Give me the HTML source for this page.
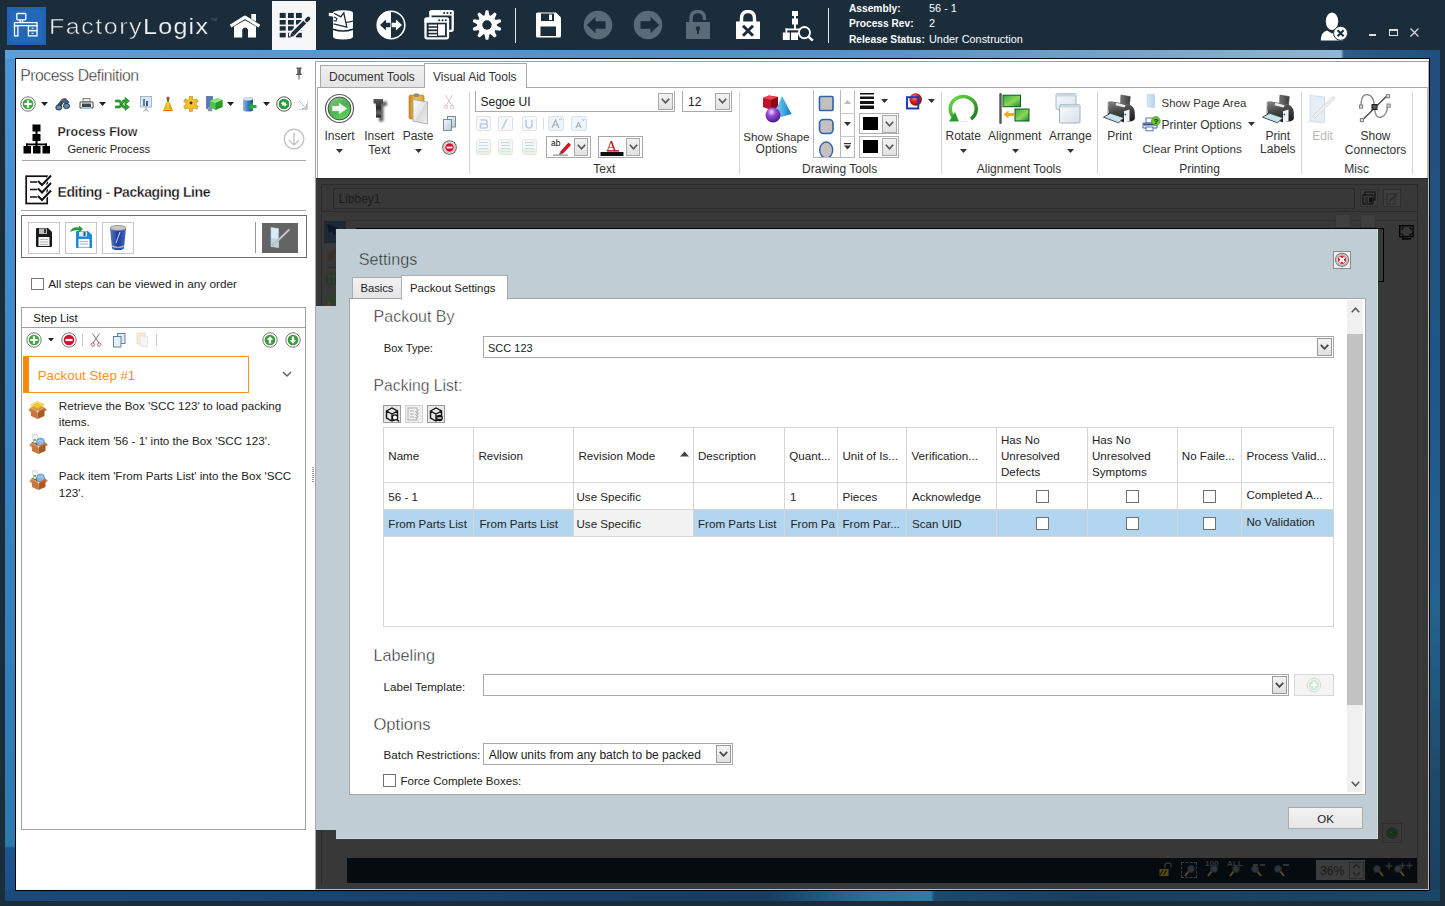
<!DOCTYPE html>
<html><head><meta charset="utf-8">
<style>
*{box-sizing:border-box;margin:0;padding:0}
html,body{width:1445px;height:906px;overflow:hidden;background:#1b2d3b;font-family:"Liberation Sans",sans-serif;color:#222;position:relative}
.a{position:absolute}
.t{position:absolute;white-space:nowrap}
</style></head><body>
<!-- TOP BAR -->
<div class="a" style="left:0;top:0;width:1445px;height:50px;background:#1b2d3b"></div>
<div class="a" style="left:7px;top:7px;width:39px;height:38px;background:#1f63b3"></div>
<div class="a" style="left:10px;top:10px;width:33px;height:32px;background:#2267b8"></div>
<svg class="a" style="left:7px;top:7px" width="39" height="38" viewBox="0 0 39 38" fill="none" stroke="#fff" stroke-width="1.3">
<rect x="9.8" y="6.5" width="9" height="6.3" rx="0.8"/><path d="M13 12.8v2.5h2.6v-2.5"/>
<rect x="7.5" y="15.6" width="22.5" height="3"/><rect x="7.5" y="18.6" width="3.4" height="10.3"/>
<rect x="21.4" y="18.6" width="8.6" height="5"/><rect x="21.4" y="23.6" width="8.6" height="5.3"/>
<path d="M24.6 21.2h2M24.6 26.3h2" stroke-width="1"/>
</svg>
<div class="a" style="left:49px;top:14px;font-size:22px;line-height:26px;color:#f0f0f0;letter-spacing:1.3px;white-space:nowrap;font-weight:400;-webkit-text-stroke:0.55px #1b2d3b;transform:scaleX(1.14);transform-origin:0 0">Factory<span style="letter-spacing:1.1px;-webkit-text-stroke:0.15px #1b2d3b">Logix</span></div>
<div class="a" style="left:211px;top:17px;font-size:4px;line-height:5px;color:#667">TM</div>
<!-- selected tab -->
<div class="a" style="left:272px;top:1px;width:44px;height:49px;background:#f7f7fa"></div>
<!-- home -->
<svg class="a" style="left:229px;top:12px" width="32" height="28" viewBox="0 0 32 28">
<path d="M22.3 1.9H27V9.5L22.3 7Z" fill="#fff"/>
<path d="M1.6 14.2 L16 5.2 L30.4 14.2" fill="none" stroke="#fff" stroke-width="3.3" stroke-linejoin="round"/>
<path d="M5 14.5 L16 8.2 L27 14.5 V25.6 H19 V17.6 Q16 13.6 13.2 17.6 V25.6 H5 Z" fill="#fff"/>
</svg>
<!-- grid pencil -->
<svg class="a" style="left:278px;top:12px" width="34" height="28" viewBox="0 0 34 28">
<g fill="#1b2d3b">
<rect x="1.7" y="0.9" width="6" height="5.1"/><rect x="10" y="0.9" width="5.8" height="5.1"/><rect x="18" y="0.9" width="5.8" height="5.1"/>
<rect x="1.7" y="8" width="6" height="4.6"/><rect x="10" y="8" width="5.8" height="4.6"/><rect x="18" y="8" width="5.8" height="4.6"/>
<rect x="1.7" y="14.2" width="6" height="4.4"/><rect x="10" y="14.2" width="5.8" height="4.4"/><rect x="18" y="14.2" width="5.8" height="4.4"/>
<rect x="1.7" y="20.8" width="6" height="4.6"/><rect x="10" y="20.8" width="5.8" height="4.6"/><rect x="18" y="20.8" width="5.8" height="4.6"/>
</g>
<path d="M14.5 22.5L27.5 9.5M28.8 8.2L30.8 6.2" stroke="#f7f7fa" stroke-width="7" stroke-linecap="round"/>
<path d="M14.8 22.2L26.8 10.2" stroke="#1b2d3b" stroke-width="3.8"/>
<path d="M12.2 25L13.2 20.8L16.4 24Z" fill="#1b2d3b"/>
<path d="M28.8 8.2L30.4 6.6" stroke="#1b2d3b" stroke-width="3.8" stroke-linecap="round"/>
</svg>
<!-- db import -->
<svg class="a" style="left:328px;top:10px" width="26" height="30" viewBox="0 0 26 30">
<path d="M5 3 Q5 0.3 15 0.3 Q25 0.3 25 3 V26.5 Q25 29.4 15 29.4 Q5 29.4 5 26.5 Z" fill="#fff"/>
<path d="M0.8 2.8 L6 3.2 L6 6.8 L0.8 6 Z" fill="#fff"/>
<path d="M5 19.2 Q15 22.8 25 19.2" stroke="#1b2d3b" stroke-width="1.5" fill="none"/>
<path d="M6 3.2 L12.8 6.8 L15.8 2.8 L18.8 17.2 L5.5 13.8" stroke="#1b2d3b" stroke-width="1.3" fill="none" stroke-linejoin="miter"/>
<path d="M17.8 12.5 Q22 12 25 11" stroke="#1b2d3b" stroke-width="1.2" fill="none"/>
<path d="M6 7 L9 8.5 L8 11 L5.5 10.5" stroke="#1b2d3b" stroke-width="1.1" fill="none"/>
</svg>
<!-- circle arrows -->
<svg class="a" style="left:376px;top:10px" width="30" height="30" viewBox="0 0 30 30">
<circle cx="15" cy="15" r="13.8" fill="none" stroke="#fff" stroke-width="1.6"/>
<path d="M15 1.2 A13.8 13.8 0 0 0 15 28.8 Z" fill="#fff"/>
<path d="M4 15 L10 9.5 V12.8 H14.4 V17.2 H10 V20.5 Z" fill="#1b2d3b"/>
<path d="M26 15 L20 9.5 V12.8 H15.6 V17.2 H20 V20.5 Z" fill="#fff"/>
</svg>
<!-- windows -->
<svg class="a" style="left:424px;top:10px" width="31" height="31" viewBox="0 0 31 31">
<rect x="6.4" y="1.4" width="22.3" height="19.4" rx="1.6" fill="#1b2d3b" stroke="#fff" stroke-width="2.3"/>
<rect x="5.3" y="0.3" width="24.5" height="5.2" rx="1.5" fill="#fff"/>
<rect x="1.5" y="8.7" width="22.5" height="19.6" rx="1.6" fill="#1b2d3b" stroke="#fff" stroke-width="2.3"/>
<rect x="0.4" y="7.6" width="24.7" height="5.1" rx="1.5" fill="#fff"/>
<g fill="#fff"><rect x="4.6" y="14.6" width="8.4" height="1.6"/><rect x="4.6" y="17.8" width="8.4" height="1.6"/><rect x="4.6" y="21.2" width="8.4" height="1.6"/><rect x="4.6" y="24.4" width="8.4" height="1.6"/><rect x="14.1" y="14.3" width="6.9" height="11.2"/></g>
<g fill="#1b2d3b"><circle cx="20.1" cy="3" r="1.05"/><circle cx="23.4" cy="3" r="1.05"/><circle cx="26.7" cy="3" r="1.05"/><circle cx="15.2" cy="10.2" r="1.05"/><circle cx="18.5" cy="10.2" r="1.05"/><circle cx="21.8" cy="10.2" r="1.05"/></g>
</svg>
<!-- gear -->
<svg class="a" style="left:472px;top:10px" width="30" height="30" viewBox="-15 -15 30 30">
<g fill="#fff">
<circle r="10"/>
<g id="tooth"><path d="M-1.4 -14.4Q0 -15 1.4 -14.4L2.6 -8.5H-2.6Z"/></g>
<use href="#tooth" transform="rotate(36)"/><use href="#tooth" transform="rotate(72)"/><use href="#tooth" transform="rotate(108)"/><use href="#tooth" transform="rotate(144)"/><use href="#tooth" transform="rotate(180)"/><use href="#tooth" transform="rotate(216)"/><use href="#tooth" transform="rotate(252)"/><use href="#tooth" transform="rotate(288)"/><use href="#tooth" transform="rotate(324)"/>
</g>
<circle r="4.7" fill="#1b2d3b"/>
</svg>
<div class="a" style="left:515px;top:8px;width:1.4px;height:35px;background:#e8e8e8"></div>
<!-- save -->
<svg class="a" style="left:535px;top:12px" width="27" height="26" viewBox="0 0 27 26">
<path d="M1 2 Q1 0.5 2.5 0.5 H21 L26 5.5 V24 Q26 25.5 24.5 25.5 H2.5 Q1 25.5 1 24 Z" fill="#fff"/>
<rect x="6" y="1.5" width="13" height="7.5" fill="#1b2d3b"/><rect x="14" y="2.5" width="3" height="5.5" fill="#fff"/>
<rect x="5.5" y="14.5" width="15.5" height="9.5" fill="#1b2d3b"/>
</svg>
<!-- back / fwd -->
<svg class="a" style="left:583px;top:10px" width="30" height="30" viewBox="0 0 30 30">
<circle cx="15" cy="15" r="14.3" fill="#5a6a77"/><path d="M3.8 15 L12.5 6.8 V11.3 H22.5 V18.7 H12.5 V23.2 Z" fill="#1b2d3b"/>
</svg>
<svg class="a" style="left:633px;top:10px" width="30" height="30" viewBox="0 0 30 30">
<circle cx="15" cy="15" r="14.3" fill="#5a6a77"/><path d="M26.2 15 L17.5 6.8 V11.3 H7.5 V18.7 H17.5 V23.2 Z" fill="#1b2d3b"/>
</svg>
<!-- unlock -->
<svg class="a" style="left:685px;top:10px" width="26" height="30" viewBox="0 0 26 30">
<path d="M6 12 V8.5 Q6 1.5 12.8 1.5 Q19.5 1.5 19.5 8.5 V10" fill="none" stroke="#5a6a77" stroke-width="3.4"/>
<rect x="1" y="12" width="24" height="17" fill="#5a6a77"/>
<circle cx="13" cy="18.5" r="2.2" fill="#1b2d3b"/><rect x="12" y="19" width="2" height="5" fill="#1b2d3b"/>
</svg>
<!-- lock x -->
<svg class="a" style="left:735px;top:10px" width="26" height="30" viewBox="0 0 26 30">
<path d="M6.5 12 V8.5 Q6.5 1.5 13 1.5 Q19.5 1.5 19.5 8.5 V12" fill="none" stroke="#fff" stroke-width="3.4"/>
<rect x="1" y="11.5" width="24" height="17.5" fill="#fff"/>
<path d="M8 15.8 L18 25.8 M18 15.8 L8 25.8" stroke="#1b2d3b" stroke-width="3"/>
</svg>
<!-- tree search -->
<svg class="a" style="left:782px;top:10px" width="32" height="31" viewBox="0 0 32 31">
<g fill="#fff"><rect x="10" y="1" width="6" height="5"/><rect x="10" y="8.5" width="6" height="6"/><rect x="12" y="5" width="2" height="4"/><rect x="12" y="14" width="2" height="5"/>
<rect x="0.8" y="22.5" width="7" height="7.5"/><rect x="3.5" y="18.5" width="14" height="1.8"/><rect x="3.5" y="18.5" width="1.8" height="5"/><rect x="9" y="22.5" width="7" height="7.5"/></g>
<circle cx="22.4" cy="22.6" r="5.6" fill="#1b2d3b" stroke="#fff" stroke-width="1.9"/>
<path d="M26.4 26.6 L30.8 30.6" stroke="#fff" stroke-width="2.6"/>
</svg>
<div class="a" style="left:828px;top:8px;width:1.4px;height:35px;background:#e8e8e8"></div>
<div class="a" style="left:849px;top:1.2px;font-size:10.2px;line-height:15.2px;font-weight:700;color:#fff;white-space:nowrap">Assembly:<br>Process Rev:<br>Release Status:</div>
<div class="a" style="left:929px;top:1.2px;font-size:10.9px;line-height:15.2px;color:#fff;white-space:nowrap">56 - 1<br>2<br>Under Construction</div>
<!-- user x -->
<svg class="a" style="left:1318px;top:11px" width="30" height="30" viewBox="0 0 30 30">
<ellipse cx="14" cy="10.3" rx="6.2" ry="8.8" fill="#fff"/>
<path d="M2.8 29.5 Q2.8 21 9 19.5 L14 22.5 L19 19.5 Q25 21 25 29.5 Z" fill="#fff"/>
<circle cx="22.6" cy="22.3" r="7" fill="#fff" stroke="#1b2d3b" stroke-width="1"/>
<path d="M19.6 19.3 L25.6 25.3 M25.6 19.3 L19.6 25.3" stroke="#1b2d3b" stroke-width="2.1"/>
</svg>
<div class="a" style="left:1369px;top:33.6px;width:7px;height:2.6px;background:#ddd"></div>
<div class="a" style="left:1389px;top:29px;width:9px;height:7px;border:1.2px solid #ddd;border-top-width:2px"></div>
<svg class="a" style="left:1410px;top:28px" width="9" height="9" viewBox="0 0 9 9"><path d="M0.5 0.5 L8.5 8.5 M8.5 0.5 L0.5 8.5" stroke="#ddd" stroke-width="1.2"/></svg>
<!-- frame -->
<div class="a" style="left:5px;top:50px;width:1435px;height:850px;background:linear-gradient(180deg,#4d95d6 0px,#3d86c8 350px,#3280bc 600px,#2a7aae 796px,#1d5590 798px,#1b5088 850px)"></div>
<div class="a" style="left:5px;top:50px;width:1435px;height:9px;background:linear-gradient(90deg,#57a0dc 0%,#4c92d2 45%,#5a93c8 62%,#78a6c8 80%,#8fb6d2 93.1%,#2c5c8a 93.3%,#1f4f7f 100%)"></div>
<div class="a" style="left:1429px;top:59px;width:11px;height:841px;background:linear-gradient(180deg,#224e7c 0%,#1f5585 35%,#24628f 65%,#1d4a6c 85%,#1a3f5e 100%)"></div>
<div class="a" style="left:5px;top:890px;width:1435px;height:11px;background:linear-gradient(90deg,#1a4a7a 0%,#173f68 40%,#163c60 53%,#1f5a80 57%,#2a6f96 60%,#2e7ca4 64.5%,#1a4a6e 64.8%,#173e60 75%,#1a4668 100%)"></div>
<!-- window black border -->
<div class="a" style="left:15px;top:58px;width:1415px;height:833px;border:1px solid #000;background:#fff"></div>

<!-- LEFT PANEL -->
<div class="a" style="left:16px;top:59px;width:300px;height:831px;background:#fff"></div>

<!-- RIGHT: ribbon -->
<div class="a" style="left:316px;top:59px;width:1113px;height:120px;background:#fff"></div>
<!-- dark content -->
<div class="a" style="left:316px;top:178px;width:1112px;height:712px;background:#383838"></div>

<div class="t" style="left:20.2px;top:65.53px;font-size:15.8px;line-height:20px;color:#222;font-weight:400;-webkit-text-stroke:0.4px #fff;letter-spacing:-0.5px">Process Definition</div>
<svg class="a" style="left:294px;top:67px" width="10" height="13"><path d="M2.5 0.5H7.5V2H6.8V6.5L8.5 8H1.5L3.2 6.5V2H2.5Z" fill="#555"/><rect x="4.5" y="8" width="1" height="4.5" fill="#555"/><rect x="3.5" y="1.5" width="1" height="5" fill="#999"/></svg>
<svg class="a" style="left:20px;top:95.8px" width="16" height="16" viewBox="0 0 16 16"><circle cx="8" cy="8" r="7.2" fill="#fff" stroke="#777" stroke-width="1"/><circle cx="8" cy="8" r="5.300000000000001" fill="#3aaa3a"/><path d="M8 4.3V11.7M4.3 8H11.7" stroke="#fff" stroke-width="2.2"/></svg>
<svg class="a" style="left:41.3px;top:102.0px" width="7" height="4"><path d="M0 0H7L3.5 4Z" fill="#222"/></svg>
<svg class="a" style="left:55px;top:97px" width="16" height="14" viewBox="0 0 16 14">
<path d="M1 9.5L6 3L9 5L5 11.5Z" fill="#3a4a5a"/><path d="M6 2L10.5 1L14.5 5L11 9Z" fill="#4a5a6a"/>
<ellipse cx="3.8" cy="10.5" rx="3" ry="2.6" fill="#5a8ab0" stroke="#2a3a4a" stroke-width="1"/>
<ellipse cx="11.5" cy="9" rx="3" ry="2.6" fill="#5a8ab0" stroke="#2a3a4a" stroke-width="1"/>
</svg>
<svg class="a" style="left:79px;top:97.5px" width="15" height="12" viewBox="0 0 15 12">
<rect x="4" y="0.5" width="7" height="3.5" fill="#eee" stroke="#666" stroke-width="0.8"/>
<path d="M1 4H14V10H1Z" fill="#fff" stroke="#444" stroke-width="1"/><rect x="3" y="5.5" width="9" height="3.5" fill="#444"/>
<rect x="3" y="9" width="9" height="2" fill="#9ad0e0"/>
</svg>
<svg class="a" style="left:99.2px;top:102.0px" width="7" height="4"><path d="M0 0H7L3.5 4Z" fill="#222"/></svg>
<svg class="a" style="left:114.5px;top:97px" width="15" height="14" viewBox="0 0 15 14">
<path d="M0.5 3H5L9 9H10V6.5L14.5 10L10 13.5V11H8L4 5H0.5Z" fill="#2aa82a" stroke="#1a7a1a" stroke-width="0.6"/>
<path d="M0.5 9H4L5.5 7L6.8 9L5 11H0.5Z M8 3H10V0.5L14.5 4L10 7.5V5H9L7.5 7L6.5 5.2Z" fill="#2aa82a" stroke="#1a7a1a" stroke-width="0.6"/>
</svg>
<svg class="a" style="left:139.5px;top:96px" width="12" height="16" viewBox="0 0 12 16">
<rect x="0.5" y="0.5" width="11" height="10.5" fill="#d8e8f8" stroke="#8aa8c8" stroke-width="0.8"/>
<rect x="3" y="3" width="2" height="7" fill="#6a7a8a"/><rect x="6" y="5" width="2" height="5" fill="#3a5a9a"/>
<path d="M6 11V13.5L3.5 15.5M6 13.5L8.5 15.5" stroke="#888" stroke-width="0.9" fill="none"/>
</svg>
<svg class="a" style="left:162px;top:96px" width="12" height="16" viewBox="0 0 12 16">
<defs><linearGradient id="gB" x1="0" x2="1"><stop offset="0" stop-color="#e88a10"/><stop offset="0.5" stop-color="#ffd040"/><stop offset="1" stop-color="#d07010"/></linearGradient></defs>
<ellipse cx="6" cy="2.5" rx="1.5" ry="2" fill="#8a5a2a"/><rect x="5" y="3" width="2" height="4" fill="#8a5a2a"/>
<path d="M3.5 8Q4 5.5 6 5.5Q8 5.5 8.5 8L10 13H2Z" fill="url(#gB)"/><path d="M1 13.5H11L10.5 15H1.5Z" fill="#d07010"/>
</svg>
<svg class="a" style="left:183px;top:96px" width="16" height="16" viewBox="-8 -8 16 16">
<g fill="#f0b820" stroke="#b88010" stroke-width="0.5"><circle r="5.3"/>
<rect x="-1.6" y="-7.6" width="3.2" height="3.5"/><rect x="-1.6" y="-7.6" width="3.2" height="3.5" transform="rotate(60)"/><rect x="-1.6" y="-7.6" width="3.2" height="3.5" transform="rotate(120)"/><rect x="-1.6" y="-7.6" width="3.2" height="3.5" transform="rotate(180)"/><rect x="-1.6" y="-7.6" width="3.2" height="3.5" transform="rotate(240)"/><rect x="-1.6" y="-7.6" width="3.2" height="3.5" transform="rotate(300)"/></g>
<circle r="5" fill="#f4c030"/><circle cx="0" cy="-1" r="1.4" fill="#333"/>
</svg>
<svg class="a" style="left:206px;top:96px" width="17" height="16" viewBox="0 0 17 16">
<rect x="0.5" y="0.5" width="6" height="12" fill="#5a7ab8" stroke="#3a5a9a" stroke-width="0.6"/>
<path d="M4 5L11 2L16.5 4V11L9.5 14L4 11Z" fill="#4ac84a"/><path d="M4 5L11 2L16.5 4L9.5 7Z" fill="#8aea7a"/><path d="M9.5 7V14L16.5 11V4Z" fill="#2a9a2a"/>
<circle cx="4" cy="13" r="2.5" fill="#8a9aaa"/>
</svg>
<svg class="a" style="left:227.4px;top:102.0px" width="7" height="4"><path d="M0 0H7L3.5 4Z" fill="#222"/></svg>
<svg class="a" style="left:242px;top:96px" width="15" height="16" viewBox="0 0 15 16">
<defs><linearGradient id="gDb" x1="0" x2="1"><stop offset="0" stop-color="#9ab8d8"/><stop offset="0.5" stop-color="#3a7ac8"/><stop offset="1" stop-color="#1a4a8a"/></linearGradient></defs>
<path d="M1 3Q1 1 6 1Q11 1 11 3V14Q11 15.5 6 15.5Q1 15.5 1 14Z" fill="url(#gDb)"/><ellipse cx="6" cy="2.8" rx="5" ry="1.8" fill="#d8e4f0"/>
<path d="M6 11L11 6.5V9H14.5V12H11V14.5Z" fill="#2aaa3a"/>
</svg>
<svg class="a" style="left:262.5px;top:102.0px" width="7" height="4"><path d="M0 0H7L3.5 4Z" fill="#222"/></svg>
<svg class="a" style="left:276px;top:95.8px" width="16" height="16" viewBox="0 0 16 16"><circle cx="8" cy="8" r="7.2" fill="#fff" stroke="#555" stroke-width="1"/><circle cx="8" cy="8" r="5.300000000000001" fill="#2a9a3a"/><path d="M5 7.5L7.5 5V6.5H10V8.5H7.5V10Z M11 8.5L8.5 11V9.5H6V7.5H8.5V6Z" fill="#fff"/></svg>
<svg class="a" style="left:298px;top:100px" width="10" height="10"><path d="M1 1L8 8M4 8.5H8.5V4" fill="none" stroke="#bbb" stroke-width="1"/><path d="M0.5 9.5H9.5V0.5" fill="none" stroke="#ccc" stroke-width="0.8"/></svg>
<svg class="a" style="left:23px;top:124px" width="28" height="30" viewBox="0 0 28 30">
<g fill="#000"><rect x="9.5" y="0.5" width="8" height="7"/><rect x="9.5" y="10" width="8" height="7"/><rect x="12.5" y="7" width="2" height="3.5"/><rect x="12.5" y="17" width="2" height="3"/>
<rect x="3" y="19.5" width="21" height="1.8"/><rect x="3" y="19.5" width="1.8" height="3"/><rect x="12.5" y="19.5" width="2" height="3"/><rect x="22.2" y="19.5" width="1.8" height="3"/>
<rect x="0.5" y="22" width="7.5" height="7.5"/><rect x="10" y="22" width="7.5" height="7.5"/><rect x="19.5" y="22" width="7.5" height="7.5"/></g>
</svg>
<div class="t" style="left:57.5px;top:124.20px;font-size:12.4px;line-height:16px;color:#111;font-weight:700;-webkit-text-stroke:0.25px #fff">Process Flow</div>
<div class="t" style="left:67.4px;top:142.02px;font-size:11.2px;line-height:14px;color:#222;font-weight:400;">Generic Process</div>
<svg class="a" style="left:283px;top:128px" width="22" height="22" viewBox="0 0 22 22"><circle cx="11" cy="11" r="9.8" fill="none" stroke="#c4c4c4" stroke-width="1.4"/><path d="M11 4.5V17M6 12L11 17L16 12" fill="none" stroke="#c4c4c4" stroke-width="1.4"/></svg>
<div class="a" style="left:22px;top:160px;width:284px;height:1px;background:#a8a8a8"></div>
<svg class="a" style="left:25px;top:175px" width="28" height="30" viewBox="0 0 28 30">
<rect x="1.2" y="1.2" width="21" height="27.3" fill="#fff" stroke="#111" stroke-width="1.7"/>
<path d="M5 7H13M5 14.5H13M5 22H13" stroke="#111" stroke-width="1.5"/>
<path d="M13 6L17 10L26 0.5M13 13.5L17 17.5L26 8M13 21L17 25L26 15.5" fill="none" stroke="#fff" stroke-width="3.6"/>
<path d="M13 6L17 10L26 0.5M13 13.5L17 17.5L26 8M13 21L17 25L26 15.5" fill="none" stroke="#111" stroke-width="2"/>
</svg>
<div class="t" style="left:57.5px;top:183.45px;font-size:14px;line-height:18px;color:#111;font-weight:700;letter-spacing:-0.42px;-webkit-text-stroke:0.3px #fff">Editing - Packaging Line</div>
<div class="a" style="left:21px;top:210px;width:285px;height:1px;background:#a8a8a8"></div>
<div class="a" style="left:21px;top:215px;width:285.5px;height:43px;border:1px solid #6e6e6e"></div>
<div class="a" style="left:28px;top:222px;width:32px;height:32px;border:1px solid #c6c6c6"></div>
<div class="a" style="left:65px;top:222px;width:32px;height:32px;border:1px solid #c6c6c6"></div>
<div class="a" style="left:102px;top:222px;width:32px;height:32px;border:1px solid #c6c6c6"></div>
<svg class="a" style="left:35px;top:227px" width="18" height="21" viewBox="0 0 18 21">
<path d="M1 2Q1 1 2 1H13L17 5V19Q17 20 16 20H2Q1 20 1 19Z" fill="#1a1a1a"/><rect x="4" y="1.5" width="8" height="5.5" fill="#bbb"/><rect x="9" y="2" width="2" height="4" fill="#333"/>
<rect x="3.5" y="10" width="11" height="9" fill="#f4f4f4"/><path d="M5 12.5H13M5 15H13M5 17.5H13" stroke="#aaa" stroke-width="0.8"/>
</svg>
<svg class="a" style="left:69px;top:225px" width="24" height="24" viewBox="0 0 24 24">
<path d="M7 7Q7 6 8 6H19L23 10V23H8Q7 23 7 22Z" fill="#1a8ad8"/><rect x="10" y="6.5" width="8" height="5" fill="#d8e8f4"/><rect x="14.5" y="7" width="2" height="4" fill="#1a5a9a"/>
<rect x="9.5" y="14" width="11" height="8.5" fill="#f4f8fc"/><path d="M11 16.5H19M11 19H19" stroke="#9ab" stroke-width="0.8"/>
<path d="M1 7Q3 1 10 2.5L10 0.5L14 4L10 7.5L10 5.5Q5 4.5 1 7Z" fill="#2a9a3a"/>
</svg>
<svg class="a" style="left:109px;top:225px" width="18" height="26" viewBox="0 0 18 26">
<defs><linearGradient id="gBin" x1="0" x2="1"><stop offset="0" stop-color="#5a7ab8"/><stop offset="0.5" stop-color="#1a3aa8"/><stop offset="1" stop-color="#4a6ab0"/></linearGradient></defs>
<path d="M1 3H17L15 23Q15 25 9 25Q3 25 3 23Z" fill="url(#gBin)"/><ellipse cx="9" cy="3" rx="8" ry="2.5" fill="#c8c8c8" stroke="#888" stroke-width="0.8"/>
<path d="M11 7L7 18" stroke="#fff" stroke-width="1" opacity="0.8"/><path d="M3 21Q9 24 15 21" stroke="#aaa" stroke-width="1.5" fill="none"/>
</svg>
<div class="a" style="left:255px;top:222px;width:1px;height:31px;background:#999"></div>
<div class="a" style="left:262px;top:222.8px;width:36px;height:30.2px;background:#646464"></div>
<svg class="a" style="left:269px;top:226px" width="24" height="24" viewBox="0 0 24 24">
<path d="M2 1.5L9.5 2.5V21.5L2 20.5Z" fill="#d8ecf8" stroke="#b8d0e0" stroke-width="0.6"/><path d="M2 12L9.5 13V21.5L2 20.5Z" fill="#b8d4e4"/>
<path d="M3 19L19.5 3L21 4L4.5 20Z" fill="#d0d0d0" stroke="#999" stroke-width="0.5"/>
</svg>
<div class="a" style="left:31px;top:277.5px;width:12.5px;height:12.5px;border:1px solid #777;background:#fff"></div>
<div class="t" style="left:48.2px;top:276.91px;font-size:11.8px;line-height:15px;color:#222;font-weight:400;">All steps can be viewed in any order</div>
<div class="a" style="left:21px;top:306.5px;width:285px;height:523px;border:1px solid #a0a0a0"></div>
<div class="a" style="left:22px;top:327px;width:283px;height:1px;background:#a0a0a0"></div>
<div class="t" style="left:33.3px;top:310.65px;font-size:11.4px;line-height:14px;color:#111;font-weight:400;">Step List</div>
<svg class="a" style="left:26px;top:332px" width="16" height="16" viewBox="0 0 16 16"><circle cx="8" cy="8" r="7.2" fill="#fff" stroke="#777" stroke-width="1"/><circle cx="8" cy="8" r="5.300000000000001" fill="#3aaa3a"/><path d="M8 4.3V11.7M4.3 8H11.7" stroke="#fff" stroke-width="2.2"/></svg>
<svg class="a" style="left:48.0px;top:337.75px" width="6" height="3.5"><path d="M0 0H6L3.0 3.5Z" fill="#222"/></svg>
<svg class="a" style="left:61px;top:332px" width="16" height="16" viewBox="0 0 16 16"><circle cx="8" cy="8" r="7.2" fill="#fff" stroke="#777" stroke-width="1"/><circle cx="8" cy="8" r="5.300000000000001" fill="#d8102a"/><path d="M4.5 8H11.5" stroke="#fff" stroke-width="2.2"/></svg>
<div class="a" style="left:82px;top:334px;width:1px;height:12px;background:#ccc"></div>
<svg class="a" style="left:90px;top:333px" width="12" height="14"><path d="M2.5 0.5L9 10M9.5 0.5L3 10" stroke="#777" stroke-width="1"/><circle cx="2.8" cy="11.5" r="1.7" fill="none" stroke="#b85050" stroke-width="0.9"/><circle cx="9.2" cy="11.5" r="1.7" fill="none" stroke="#b85050" stroke-width="0.9"/></svg>
<svg class="a" style="left:113px;top:332.5px" width="13" height="15"><rect x="4.5" y="0.5" width="7.5" height="10" fill="#dde8f2" stroke="#5a7898" stroke-width="0.9"/><rect x="0.5" y="3.5" width="7.5" height="10.5" fill="#e6eef6" stroke="#5a7898" stroke-width="0.9"/></svg>
<svg class="a" style="left:136px;top:332px" width="13" height="16"><rect x="1" y="1" width="8" height="11" fill="#f6ecd8" stroke="#e8d8b8" stroke-width="0.8"/><path d="M4 3.5L11.5 4.5V15L4 14Z" fill="#f4f4f4" stroke="#e0e0e0" stroke-width="0.7"/></svg>
<div class="a" style="left:155.5px;top:334px;width:1px;height:12px;background:#ccc"></div>
<svg class="a" style="left:262px;top:332px" width="16" height="16" viewBox="0 0 16 16"><circle cx="8" cy="8" r="7.2" fill="#fff" stroke="#777" stroke-width="1"/><circle cx="8" cy="8" r="5.300000000000001" fill="#3a9a3a"/><path d="M8 4.2L11.3 7.8H9.2V11.5H6.8V7.8H4.7Z" fill="#fff"/></svg>
<svg class="a" style="left:285px;top:332px" width="16" height="16" viewBox="0 0 16 16"><circle cx="8" cy="8" r="7.2" fill="#fff" stroke="#777" stroke-width="1"/><circle cx="8" cy="8" r="5.300000000000001" fill="#3a9a3a"/><path d="M8 11.8L11.3 8.2H9.2V4.5H6.8V8.2H4.7Z" fill="#fff"/></svg>
<div class="a" style="left:23px;top:356px;width:226px;height:37px;border:1px solid #f59322;border-left:6px solid #f68a0a;background:#fff"></div>
<div class="t" style="left:37.7px;top:366.59px;font-size:13.3px;line-height:17px;color:#f7901e;font-weight:400;">Packout Step #1</div>
<svg class="a" style="left:282px;top:371px" width="10" height="7"><path d="M1 1L5 5L9 1" fill="none" stroke="#666" stroke-width="1.5"/></svg>
<svg class="a" style="left:27px;top:399px" width="21" height="21" viewBox="0 0 21 21"><path d="M3.5 8.5L10.5 5L17.5 8.5L10.5 12Z" fill="#d89a30"/><path d="M3 6L10 2L18 5.5L11 9.5Z" fill="#f4c23a"/><path d="M5 6L10 3.3L15.5 5.6" stroke="#fde68a" stroke-width="1" fill="none"/><path d="M3.5 8.5L1 11.5L7.5 14.5L10.5 12Z" fill="#d8905a"/><path d="M17.5 8.5L20 11L14 14L10.5 12Z" fill="#c87a48"/><path d="M3.5 10L10.5 13.5V20L4 17Z" fill="#c8783a"/><path d="M10.5 13.5L17.5 10V17L10.5 20Z" fill="#a85c24"/></svg>
<div class="t" style="left:58.8px;top:397.76px;font-size:11.65px;line-height:15px;color:#222;font-weight:400;">Retrieve the Box 'SCC 123' to load packing</div>
<div class="t" style="left:58.8px;top:414.46px;font-size:11.65px;line-height:15px;color:#222;font-weight:400;">items.</div>
<svg class="a" style="left:27.5px;top:434px" width="21" height="21" viewBox="0 0 21 21"><path d="M3.5 8.5L10.5 5L17.5 8.5L10.5 12Z" fill="#7a4a20"/><path d="M4 1L9 0.5L11 8L6 9Z" fill="#f4f4f4" stroke="#b8c4cc" stroke-width="0.6"/><rect x="5.5" y="5" width="2.5" height="2" fill="#5ac04a"/><circle cx="12.5" cy="8" r="4" fill="#8ab8e4" stroke="#5a88b8" stroke-width="0.7"/><path d="M10 7Q12.5 5.5 15 8" stroke="#c8e0f4" stroke-width="0.7" fill="none"/><path d="M3.5 8.5L1 11.5L7.5 14.5L10.5 12Z" fill="#d8905a"/><path d="M17.5 8.5L20 11L14 14L10.5 12Z" fill="#c87a48"/><path d="M3.5 10L10.5 13.5V20L4 17Z" fill="#c8783a"/><path d="M10.5 13.5L17.5 10V17L10.5 20Z" fill="#a85c24"/></svg>
<div class="t" style="left:58.8px;top:433.46px;font-size:11.65px;line-height:15px;color:#222;font-weight:400;">Pack item '56 - 1' into the Box 'SCC 123'.</div>
<svg class="a" style="left:27.5px;top:469.5px" width="21" height="21" viewBox="0 0 21 21"><path d="M3.5 8.5L10.5 5L17.5 8.5L10.5 12Z" fill="#7a4a20"/><path d="M4 1L9 0.5L11 8L6 9Z" fill="#f4f4f4" stroke="#b8c4cc" stroke-width="0.6"/><rect x="5.5" y="5" width="2.5" height="2" fill="#5ac04a"/><circle cx="12.5" cy="8" r="4" fill="#8ab8e4" stroke="#5a88b8" stroke-width="0.7"/><path d="M10 7Q12.5 5.5 15 8" stroke="#c8e0f4" stroke-width="0.7" fill="none"/><path d="M3.5 8.5L1 11.5L7.5 14.5L10.5 12Z" fill="#d8905a"/><path d="M17.5 8.5L20 11L14 14L10.5 12Z" fill="#c87a48"/><path d="M3.5 10L10.5 13.5V20L4 17Z" fill="#c8783a"/><path d="M10.5 13.5L17.5 10V17L10.5 20Z" fill="#a85c24"/></svg>
<div class="t" style="left:58.8px;top:467.76px;font-size:11.65px;line-height:15px;color:#222;font-weight:400;">Pack item 'From Parts List' into the Box 'SCC</div>
<div class="t" style="left:58.8px;top:484.96px;font-size:11.65px;line-height:15px;color:#222;font-weight:400;">123'.</div>
<div class="a" style="left:315px;top:61px;width:1114px;height:118px;border:1px solid #a0a0a0;border-bottom:none;border-right-color:#b0b0b0"></div>
<div class="a" style="left:320px;top:65px;width:105px;height:23px;border:1px solid #a8a8a8;background:linear-gradient(#f0f0f0,#e4e4e4)"></div>
<div class="a" style="left:317px;top:87px;width:1111px;height:92px;border-top:1px solid #a8a8a8;border-left:1px solid #a8a8a8;border-right:1px solid #b8b8b8;background:#fff"></div>
<div class="a" style="left:424px;top:63px;width:103px;height:25px;border:1px solid #a8a8a8;border-bottom:none;background:#fff"></div>
<div class="t" style="left:329px;top:69.84px;font-size:12px;line-height:15px;color:#333;font-weight:400;">Document Tools</div>
<div class="t" style="left:433px;top:69.84px;font-size:12px;line-height:15px;color:#333;font-weight:400;">Visual Aid Tools</div>
<svg class="a" style="left:324px;top:93px" width="31" height="31" viewBox="0 0 31 31">
<defs><linearGradient id="gI" x1="0.2" x2="0.7" y1="0" y2="1"><stop offset="0" stop-color="#8acb8a"/><stop offset="0.45" stop-color="#4aae4a"/><stop offset="1" stop-color="#5ad85a"/></linearGradient></defs>
<circle cx="15.5" cy="15.5" r="14" fill="#fff" stroke="#5a5a5a" stroke-width="1.2"/>
<circle cx="15.5" cy="15.5" r="11.4" fill="url(#gI)" stroke="#4a4a4a" stroke-width="1"/>
<path d="M8.2 13.1H15.1V9.9L23 15.5L15.1 21.1V17.9H8.2Z" fill="#f4f4f4" stroke="#e0e0e0" stroke-width="0.5"/>
</svg>
<div class="t" style="left:339.5px;transform:translateX(-50%);top:128.94px;font-size:12px;line-height:15px;color:#333;font-weight:400;">Insert</div>
<svg class="a" style="left:336.0px;top:148.5px" width="7" height="4"><path d="M0 0H7L3.5 4Z" fill="#333"/></svg>
<svg class="a" style="left:370px;top:97px" width="22" height="28" viewBox="0 0 22 28">
<defs><filter id="bl" x="-50%" y="-50%" width="200%" height="200%"><feGaussianBlur stdDeviation="1.3"/></filter>
<linearGradient id="gT" x1="0" x2="0" y1="0" y2="1"><stop offset="0" stop-color="#5a5a5a"/><stop offset="0.5" stop-color="#2a2a2a"/><stop offset="0.75" stop-color="#6a6a6a"/><stop offset="1" stop-color="#1a1a1a"/></linearGradient></defs>
<path d="M6 4.5H17V9H13.5V24.5H9V9H6Z" fill="#000" opacity="0.6" filter="url(#bl)"/>
<path d="M3.5 2H13V6.5H11V20.5H6V6.5H3.5Z" fill="url(#gT)"/>
</svg>
<div class="t" style="left:379.3px;transform:translateX(-50%);top:128.94px;font-size:12px;line-height:15px;color:#333;font-weight:400;">Insert</div>
<div class="t" style="left:379.3px;transform:translateX(-50%);top:142.74px;font-size:12px;line-height:15px;color:#333;font-weight:400;">Text</div>
<svg class="a" style="left:408px;top:93px" width="21" height="32" viewBox="0 0 21 32">
<defs><linearGradient id="gC" x1="0" x2="1"><stop offset="0" stop-color="#c98a1a"/><stop offset="0.5" stop-color="#f2c250"/><stop offset="1" stop-color="#d9a030"/></linearGradient>
<linearGradient id="gP" x1="0" x2="1" y1="0" y2="1"><stop offset="0" stop-color="#fafafa"/><stop offset="0.5" stop-color="#e6e6e6"/><stop offset="0.52" stop-color="#d8d8d8"/><stop offset="1" stop-color="#f0f0f0"/></linearGradient></defs>
<rect x="1" y="2" width="15" height="24" rx="1.5" fill="url(#gC)" stroke="#b07a1a" stroke-width="0.6"/>
<rect x="6" y="0.5" width="5" height="3.5" rx="1" fill="#8a8a8a"/>
<path d="M5 6.5L19.5 9V31L5 28Z" fill="url(#gP)" stroke="#9a9a9a" stroke-width="0.7"/>
</svg>
<div class="t" style="left:418px;transform:translateX(-50%);top:128.94px;font-size:12px;line-height:15px;color:#333;font-weight:400;">Paste</div>
<svg class="a" style="left:414.5px;top:148.5px" width="7" height="4"><path d="M0 0H7L3.5 4Z" fill="#333"/></svg>
<svg class="a" style="left:442px;top:94px" width="14" height="16" viewBox="0 0 14 16">
<path d="M3.5 1L9.8 11.5M10.5 1L4.2 11.5" stroke="#c4c4c4" stroke-width="0.9"/>
<circle cx="4" cy="13" r="1.7" fill="none" stroke="#e8b4b4" stroke-width="0.8"/><circle cx="10" cy="13" r="1.7" fill="none" stroke="#e8b4b4" stroke-width="0.8"/>
</svg>
<svg class="a" style="left:443px;top:116px" width="13" height="15" viewBox="0 0 13 15">
<defs><linearGradient id="gCp" x1="0" x2="1" y1="0" y2="1"><stop offset="0" stop-color="#f4f8fb"/><stop offset="1" stop-color="#b8ccd8"/></linearGradient></defs><rect x="4.5" y="0.5" width="8" height="10.5" fill="url(#gCp)" stroke="#6a8498" stroke-width="0.9"/>
<rect x="0.5" y="3.5" width="8" height="11" fill="url(#gCp)" stroke="#6a8498" stroke-width="0.9"/>
</svg>
<svg class="a" style="left:441.5px;top:139.5px" width="15" height="15" viewBox="0 0 15 15">
<circle cx="7.5" cy="7.5" r="6.8" fill="#fff" stroke="#6a6a6a" stroke-width="1.1"/><circle cx="7.5" cy="7.5" r="5.4" fill="#fff" stroke="#9a9a9a" stroke-width="0.7"/>
<circle cx="7.5" cy="7.5" r="4.3" fill="#d8102a"/><rect x="4.6" y="6.6" width="5.8" height="1.8" fill="#fff"/>
</svg>
<div class="a" style="left:469px;top:92px;width:1px;height:82px;background:#d5d5d5"></div>
<div class="a" style="left:475px;top:91px;width:200px;height:21px;border:1px solid #a9a9a9;border-top:none;background:#fff"></div>
<div class="a" style="left:658px;top:92.7px;width:15px;height:17px;border:1px solid #a9a9a9;background:linear-gradient(#f2f2f2,#e2e2e2)"></div><svg class="a" style="left:661.0px;top:98.2px" width="9" height="6"><path d="M0.8 0.8L4.5 4.8L8.2 0.8" fill="none" stroke="#555" stroke-width="1.6"/></svg>
<div class="t" style="left:480.5px;top:95.14px;font-size:12px;line-height:15px;color:#222;font-weight:400;">Segoe UI</div>
<div class="a" style="left:682px;top:91px;width:50px;height:21px;border:1px solid #a9a9a9;border-top:none;background:#fff"></div>
<div class="a" style="left:715px;top:92.7px;width:15px;height:17px;border:1px solid #a9a9a9;background:linear-gradient(#f2f2f2,#e2e2e2)"></div><svg class="a" style="left:718.0px;top:98.2px" width="9" height="6"><path d="M0.8 0.8L4.5 4.8L8.2 0.8" fill="none" stroke="#555" stroke-width="1.6"/></svg>
<div class="t" style="left:688px;top:95.14px;font-size:12px;line-height:15px;color:#222;font-weight:400;">12</div>
<div class="a" style="left:475.6px;top:116px;width:15px;height:15px;border:1px solid #e2e2e2;border-radius:2px;background:#f7f9fb"></div>
<div class="a" style="left:498.4px;top:116px;width:15px;height:15px;border:1px solid #e2e2e2;border-radius:2px;background:#f7f9fb"></div>
<div class="a" style="left:521.8px;top:116px;width:15px;height:15px;border:1px solid #e2e2e2;border-radius:2px;background:#f7f9fb"></div>
<svg class="a" style="left:476px;top:117px" width="60" height="14" viewBox="0 0 60 14">
<path d="M4.5 3H9Q11 3 11 5Q11 7 9 7H4.5V11H9.5Q11.5 11 11.5 9Q11.5 7 9.5 7" fill="none" stroke="#b8cce8" stroke-width="1.5"/>
<path d="M31 2L26 12" stroke="#b8cce8" stroke-width="1.5"/>
<path d="M50 3V8Q50 11 53 11Q56 11 56 8V3" fill="none" stroke="#b8cce8" stroke-width="1.6"/>
</svg>
<div class="a" style="left:542.5px;top:118px;width:1px;height:12px;background:#ddd"></div>
<div class="a" style="left:548px;top:116px;width:15.5px;height:15px;border:1px solid #d8e4f2;border-radius:2px;background:#eef4fb"></div>
<div class="a" style="left:571.3px;top:116px;width:15.5px;height:15px;border:1px solid #d8e4f2;border-radius:2px;background:#eef4fb"></div>
<svg class="a" style="left:548px;top:116px" width="40" height="15" viewBox="0 0 40 15">
<path d="M4 12L7.5 4L11 12M5.5 9H9.5" fill="none" stroke="#a0a8b0" stroke-width="1.1"/><path d="M11 4L12.5 2.5L14 4" fill="none" stroke="#a0a8b0" stroke-width="0.8"/>
<path d="M28 12L30.5 6L33 12M29 10H32" fill="none" stroke="#a0a8b0" stroke-width="1"/><path d="M34 3L35.3 4.5L36.6 3" fill="none" stroke="#a0a8b0" stroke-width="0.8"/>
</svg>
<svg class="a" style="left:475.6px;top:138.5px" width="15" height="16" viewBox="0 0 15 16"><rect x="0.5" y="0.5" width="14" height="15" rx="2" fill="#f5f8f5" stroke="#e4e8e4"/><path d="M3 3.5H12M3 6.5H12M3 9.5H12M3 12.5H12" stroke="#c8d8ec" stroke-width="1"/><rect x="1" y="10" width="13" height="5" fill="#dff0d8" opacity="0.6"/></svg>
<svg class="a" style="left:498.4px;top:138.5px" width="15" height="16" viewBox="0 0 15 16"><rect x="0.5" y="0.5" width="14" height="15" rx="2" fill="#f5f8f5" stroke="#e4e8e4"/><path d="M3 3.5H12M3 6.5H12M3 9.5H12M3 12.5H12" stroke="#c8d8ec" stroke-width="1"/><rect x="1" y="10" width="13" height="5" fill="#dff0d8" opacity="0.6"/></svg>
<svg class="a" style="left:521.8px;top:138.5px" width="15" height="16" viewBox="0 0 15 16"><rect x="0.5" y="0.5" width="14" height="15" rx="2" fill="#f5f8f5" stroke="#e4e8e4"/><path d="M3 3.5H12M3 6.5H12M3 9.5H12M3 12.5H12" stroke="#c8d8ec" stroke-width="1"/><rect x="1" y="10" width="13" height="5" fill="#dff0d8" opacity="0.6"/></svg>
<div class="a" style="left:546.3px;top:136.2px;width:44.5px;height:21.5px;border:1px solid #a9a9a9;background:#fff"></div>
<div class="a" style="left:574.3px;top:138px;width:14px;height:18px;border:1px solid #a9a9a9;background:linear-gradient(#f2f2f2,#e2e2e2)"></div><svg class="a" style="left:576.8px;top:144.0px" width="9" height="6"><path d="M0.8 0.8L4.5 4.8L8.2 0.8" fill="none" stroke="#555" stroke-width="1.6"/></svg>
<svg class="a" style="left:551px;top:138px" width="22" height="18" viewBox="0 0 22 18">
<text x="0" y="8" font-family="Liberation Sans" font-size="8.5" fill="#111">ab</text>
<path d="M9 14L17.5 4.5L20 7L11.5 16Z" fill="#d8101a"/><path d="M9 14L8 17L11.5 16Z" fill="#555"/>
<rect x="2" y="16.5" width="15" height="1.3" fill="#999"/>
</svg>
<div class="a" style="left:598.2px;top:136.2px;width:44.5px;height:21.5px;border:1px solid #a9a9a9;background:#fff"></div>
<div class="a" style="left:626.3px;top:138px;width:14px;height:18px;border:1px solid #a9a9a9;background:linear-gradient(#f2f2f2,#e2e2e2)"></div><svg class="a" style="left:628.8px;top:144.0px" width="9" height="6"><path d="M0.8 0.8L4.5 4.8L8.2 0.8" fill="none" stroke="#555" stroke-width="1.6"/></svg>
<svg class="a" style="left:599px;top:137px" width="26" height="20" viewBox="0 0 26 20">
<text x="7" y="14" font-family="Liberation Serif" font-size="15" fill="#c0101a">A</text>
<rect x="8" y="13.2" width="12" height="1.4" fill="#c0101a"/>
<rect x="1.5" y="15" width="23" height="4" fill="#111"/>
</svg>
<div class="t" style="left:604.3px;transform:translateX(-50%);top:161.84px;font-size:12px;line-height:15px;color:#333;font-weight:400;">Text</div>
<div class="a" style="left:738.5px;top:92px;width:1px;height:82px;background:#d5d5d5"></div>
<svg class="a" style="left:760px;top:94px" width="34" height="30" viewBox="0 0 34 30">
<defs><radialGradient id="gS" cx="40%" cy="30%" r="70%"><stop offset="0" stop-color="#f0d8ff"/><stop offset="0.4" stop-color="#9a4ad8"/><stop offset="1" stop-color="#4a1a8a"/></radialGradient>
<linearGradient id="gPy" x1="0" x2="1"><stop offset="0" stop-color="#8ad8f8"/><stop offset="1" stop-color="#0a7ac8"/></linearGradient></defs>
<path d="M3 4L9 1.5L18 3V13L11 16L3 13Z" fill="#c0102a"/><path d="M3 4L9 1.5L18 3L11 6Z" fill="#f04050"/><path d="M11 6V16L18 13V3Z" fill="#8a0a1a"/>
<path d="M22 2L31.5 20L21 23L15 18Z" fill="url(#gPy)"/>
<circle cx="13" cy="21" r="7.5" fill="url(#gS)"/>
</svg>
<div class="t" style="left:776.3px;transform:translateX(-50%);top:128.95px;font-size:11.7px;line-height:15px;color:#333;font-weight:400;">Show Shape</div>
<div class="t" style="left:776.3px;transform:translateX(-50%);top:142.34px;font-size:12px;line-height:15px;color:#333;font-weight:400;">Options</div>
<div class="a" style="left:813px;top:90px;width:42px;height:68px;border:1px solid #b8b8b8;border-top:none"></div>
<div class="a" style="left:840px;top:90px;width:1px;height:67px;background:#b8b8b8"></div>
<div class="a" style="left:840px;top:113.3px;width:14px;height:1px;background:#c8c8c8"></div>
<div class="a" style="left:840px;top:135.5px;width:14px;height:1px;background:#c8c8c8"></div>
<svg class="a" style="left:817px;top:94px" width="20" height="63" viewBox="0 0 20 63">
<rect x="2.5" y="2.5" width="13.5" height="14" rx="1" fill="#c4c0c0" stroke="#2a64aa" stroke-width="1.6"/>
<rect x="2.5" y="25.5" width="13.5" height="14" rx="4" fill="#c4c0c0" stroke="#2a64aa" stroke-width="1.6"/>
<ellipse cx="9.2" cy="56" rx="6.5" ry="8" fill="#c4c0c0" stroke="#2a64aa" stroke-width="1.4"/>
</svg>
<svg class="a" style="left:843px;top:99px" width="9" height="52"><path d="M1 5H8L4.5 1Z" fill="#b8b8b8"/><path d="M1 23H8L4.5 27Z" fill="#333"/><rect x="1" y="44" width="7" height="1.2" fill="#333"/><path d="M1 46.5H8L4.5 50.5Z" fill="#333"/></svg>
<svg class="a" style="left:859.5px;top:93px" width="15" height="16"><rect x="0" y="0" width="14" height="1.5" fill="#111"/><rect x="0" y="3.5" width="14" height="2.5" fill="#111"/><rect x="0" y="8" width="14" height="3" fill="#111"/><rect x="0" y="12.5" width="14" height="3.5" fill="#111"/></svg>
<svg class="a" style="left:880.5px;top:99.2px" width="7" height="4"><path d="M0 0H7L3.5 4Z" fill="#333"/></svg>
<div class="a" style="left:859.3px;top:113.3px;width:39.5px;height:21.2px;border:1px solid #b0b0b0;background:#fff"></div>
<div class="a" style="left:862.5px;top:117.3px;width:15px;height:13px;background:#000"></div>
<div class="a" style="left:882.3px;top:115.0px;width:15px;height:17.6px;border:1px solid #a9a9a9;background:linear-gradient(#f2f2f2,#e2e2e2)"></div><svg class="a" style="left:885.3px;top:120.8px" width="9" height="6"><path d="M0.8 0.8L4.5 4.8L8.2 0.8" fill="none" stroke="#555" stroke-width="1.6"/></svg>
<div class="a" style="left:859.3px;top:136.4px;width:39.5px;height:21.2px;border:1px solid #b0b0b0;background:#fff"></div>
<div class="a" style="left:862.5px;top:140.4px;width:15px;height:13px;background:#000"></div>
<div class="a" style="left:882.3px;top:138.1px;width:15px;height:17.6px;border:1px solid #a9a9a9;background:linear-gradient(#f2f2f2,#e2e2e2)"></div><svg class="a" style="left:885.3px;top:143.9px" width="9" height="6"><path d="M0.8 0.8L4.5 4.8L8.2 0.8" fill="none" stroke="#555" stroke-width="1.6"/></svg>
<svg class="a" style="left:905px;top:92px" width="18" height="18" viewBox="0 0 18 18">
<defs><radialGradient id="gR" cx="40%" cy="35%" r="65%"><stop offset="0" stop-color="#ff9a8a"/><stop offset="0.5" stop-color="#e0201a"/><stop offset="1" stop-color="#8a0a0a"/></radialGradient></defs>
<rect x="2" y="5.2" width="11.3" height="11.3" fill="#f0f4fa"/>
<circle cx="10.7" cy="7.5" r="6.2" fill="url(#gR)"/>
<rect x="2" y="5.2" width="11.3" height="11.3" fill="none" stroke="#1838b0" stroke-width="1.9"/>
</svg>
<svg class="a" style="left:927.5px;top:99.2px" width="7" height="4"><path d="M0 0H7L3.5 4Z" fill="#333"/></svg>
<div class="t" style="left:839.7px;transform:translateX(-50%);top:161.74px;font-size:12px;line-height:15px;color:#333;font-weight:400;">Drawing Tools</div>
<div class="a" style="left:940.5px;top:92px;width:1px;height:82px;background:#d5d5d5"></div>
<svg class="a" style="left:947px;top:93px" width="32" height="30" viewBox="0 0 32 30">
<defs><linearGradient id="gRo" x1="0" x2="1" y1="0" y2="1"><stop offset="0" stop-color="#6ee04a"/><stop offset="1" stop-color="#1a7a1a"/></linearGradient></defs>
<path d="M8.5 26 A13 12.5 0 1 1 24 26" fill="none" stroke="url(#gRo)" stroke-width="3.6"/>
<path d="M2 28.5H12L8 19Z" fill="#2a9a2a"/>
<path d="M11 28.5H21" stroke="#e8e8e8" stroke-width="1"/>
</svg>
<div class="t" style="left:963.2px;transform:translateX(-50%);top:129.14px;font-size:12px;line-height:15px;color:#333;font-weight:400;">Rotate</div>
<svg class="a" style="left:959.7px;top:148.6px" width="7" height="4"><path d="M0 0H7L3.5 4Z" fill="#333"/></svg>
<svg class="a" style="left:999px;top:92px" width="32" height="33" viewBox="0 0 32 33">
<defs><linearGradient id="gG" x1="0" x2="1" y1="0" y2="1"><stop offset="0" stop-color="#3aa83a"/><stop offset="0.55" stop-color="#8ad85a"/><stop offset="1" stop-color="#1a8a2a"/></linearGradient></defs>
<rect x="0.3" y="1" width="2.4" height="31" rx="1.2" fill="#555"/>
<rect x="4" y="3.2" width="17.5" height="11.5" fill="url(#gG)" stroke="#0a5a2a" stroke-width="1"/>
<rect x="16" y="17" width="14" height="12" fill="url(#gG)" stroke="#0a5a2a" stroke-width="1"/>
<path d="M4.5 22.5L9.5 18.5V21H15V24H9.5V26.5Z" fill="#f8a818"/>
</svg>
<div class="t" style="left:1014.7px;transform:translateX(-50%);top:129.14px;font-size:12px;line-height:15px;color:#333;font-weight:400;">Alignment</div>
<svg class="a" style="left:1011.5px;top:148.6px" width="7" height="4"><path d="M0 0H7L3.5 4Z" fill="#333"/></svg>
<svg class="a" style="left:1055px;top:92px" width="30" height="34" viewBox="0 0 30 34">
<defs><linearGradient id="gW" x1="0" x2="1" y1="0" y2="1"><stop offset="0" stop-color="#fafcfe"/><stop offset="1" stop-color="#d8e0e8"/></linearGradient></defs>
<rect x="1" y="1.5" width="20" height="16" rx="1.5" fill="url(#gW)" stroke="#a8b8c4" stroke-width="1"/><rect x="1" y="1.5" width="20" height="3" fill="#c8d8e4"/>
<rect x="4.5" y="12.5" width="20.5" height="18.5" rx="1.5" fill="url(#gW)" stroke="#a0b0bc" stroke-width="1"/><rect x="4.5" y="12.5" width="20.5" height="3" fill="#c8d8e4"/>
</svg>
<div class="t" style="left:1070.3px;transform:translateX(-50%);top:129.14px;font-size:12px;line-height:15px;color:#333;font-weight:400;">Arrange</div>
<svg class="a" style="left:1066.5px;top:148.6px" width="7" height="4"><path d="M0 0H7L3.5 4Z" fill="#333"/></svg>
<div class="t" style="left:1019px;transform:translateX(-50%);top:162.04px;font-size:12px;line-height:15px;color:#333;font-weight:400;">Alignment Tools</div>
<div class="a" style="left:1097.3px;top:92px;width:1px;height:82px;background:#d5d5d5"></div>
<svg class="a" style="left:1102.5px;top:94px" width="33" height="30" viewBox="0 0 33 30">
<defs><linearGradient id="gPr1" x1="0" x2="0.3" y1="0" y2="1"><stop offset="0" stop-color="#8a8a8a"/><stop offset="0.5" stop-color="#4a4a4a"/><stop offset="1" stop-color="#222"/></linearGradient>
<linearGradient id="gBk1" x1="0" x2="1"><stop offset="0" stop-color="#777"/><stop offset="1" stop-color="#3a3a3a"/></linearGradient></defs>
<path d="M17.9 1 L27.3 2.5 L26.5 11 L17.5 10 Z" fill="url(#gBk1)" stroke="#444" stroke-width="0.5"/>
<path d="M4.7 8.2 Q6 7 10 7.5 L26 10.5 Q31.8 12.5 31.8 19 V24.5 Q31.2 27.2 27 27.6 L20 28.2 L4.7 20.5 Z" fill="url(#gPr1)"/>
<path d="M5 9.5 Q4 14 5.5 19" stroke="#ddd" stroke-width="0.8" fill="none"/>
<path d="M13.5 8.8 L22.5 11.2 L21.5 13.6 L12.5 11.2 Z" fill="#eee"/>
<path d="M21 17.2 L26.5 15.6 V27.3 L21 28.4 Z" fill="#f4f4f4"/>
<circle cx="22.3" cy="20.4" r="0.9" fill="#2a3ad8"/>
<path d="M0.5 23.2 L7.5 19.2 L21 23.8 L15.5 28.8 Z" fill="#c4e4ee" stroke="#3a3a3a" stroke-width="0.9"/>
</svg>
<div class="t" style="left:1119.7px;transform:translateX(-50%);top:128.84px;font-size:12px;line-height:15px;color:#333;font-weight:400;">Print</div>
<svg class="a" style="left:1145.5px;top:94px" width="9" height="14"><defs><linearGradient id="gPg" x1="0" x2="1"><stop offset="0" stop-color="#d8eaf8"/><stop offset="1" stop-color="#b8d4ee"/></linearGradient></defs><path d="M1 0.5H8.5V13.5L1.5 12.8Z" fill="url(#gPg)" stroke="#b0cce6" stroke-width="0.6"/></svg>
<div class="t" style="left:1161.6px;top:95.65px;font-size:11.4px;line-height:14px;color:#333;font-weight:400;">Show Page Area</div>
<svg class="a" style="left:1142px;top:116px" width="19" height="16" viewBox="0 0 19 16">
<rect x="4" y="2" width="7" height="5" fill="#fff" stroke="#4a64a8" stroke-width="0.9"/>
<path d="M1 7H14Q15 7 15 8V12H1Z" fill="#fff" stroke="#4a64a8" stroke-width="1"/><rect x="1.5" y="7.5" width="13" height="2" fill="#3a4a8a"/>
<rect x="4" y="11" width="7" height="3.8" fill="#fff" stroke="#4a64a8" stroke-width="0.9"/>
<circle cx="13.8" cy="5" r="4.4" fill="#6cc430" stroke="#3a8a1a" stroke-width="0.6"/>
<text x="11.4" y="8.2" font-family="Liberation Sans" font-size="8" font-weight="700" fill="#111">?</text>
</svg>
<div class="t" style="left:1161.6px;top:117.74px;font-size:12px;line-height:15px;color:#333;font-weight:400;">Printer Options</div>
<svg class="a" style="left:1247.5px;top:122.3px" width="7" height="4"><path d="M0 0H7L3.5 4Z" fill="#333"/></svg>
<div class="t" style="left:1142.6px;top:141.13px;font-size:11.75px;line-height:15px;color:#333;font-weight:400;">Clear Print Options</div>
<svg class="a" style="left:1261.5px;top:94px" width="33" height="30" viewBox="0 0 33 30">
<defs><linearGradient id="gPr2" x1="0" x2="0.3" y1="0" y2="1"><stop offset="0" stop-color="#8a8a8a"/><stop offset="0.5" stop-color="#4a4a4a"/><stop offset="1" stop-color="#222"/></linearGradient>
<linearGradient id="gBk2" x1="0" x2="1"><stop offset="0" stop-color="#777"/><stop offset="1" stop-color="#3a3a3a"/></linearGradient></defs>
<path d="M17.9 1 L27.3 2.5 L26.5 11 L17.5 10 Z" fill="url(#gBk2)" stroke="#444" stroke-width="0.5"/>
<path d="M4.7 8.2 Q6 7 10 7.5 L26 10.5 Q31.8 12.5 31.8 19 V24.5 Q31.2 27.2 27 27.6 L20 28.2 L4.7 20.5 Z" fill="url(#gPr2)"/>
<path d="M5 9.5 Q4 14 5.5 19" stroke="#ddd" stroke-width="0.8" fill="none"/>
<path d="M13.5 8.8 L22.5 11.2 L21.5 13.6 L12.5 11.2 Z" fill="#eee"/>
<path d="M21 17.2 L26.5 15.6 V27.3 L21 28.4 Z" fill="#f4f4f4"/>
<circle cx="22.3" cy="20.4" r="0.9" fill="#2a3ad8"/>
<path d="M0.5 23.2 L7.5 19.2 L21 23.8 L15.5 28.8 Z" fill="#c4e4ee" stroke="#3a3a3a" stroke-width="0.9"/>
</svg>
<div class="t" style="left:1277.8px;transform:translateX(-50%);top:128.84px;font-size:12px;line-height:15px;color:#333;font-weight:400;">Print</div>
<div class="t" style="left:1277.8px;transform:translateX(-50%);top:142.34px;font-size:12px;line-height:15px;color:#333;font-weight:400;">Labels</div>
<div class="a" style="left:1300.5px;top:92px;width:1px;height:82px;background:#d5d5d5"></div>
<svg class="a" style="left:1307px;top:94px" width="30" height="30" viewBox="0 0 30 30">
<path d="M3 1.5L17.5 3V28.5L3 27Z" fill="#e4eef6" stroke="#c8d8e4" stroke-width="0.8"/>
<path d="M0 27.5L17.5 28.8" stroke="#e0e6ea" stroke-width="1.2"/>
<path d="M5.5 22.5L26 2.5L28.5 4L8 24Z" fill="#eee" stroke="#d0d0d0" stroke-width="0.7"/>
</svg>
<div class="t" style="left:1322.6px;transform:translateX(-50%);top:128.94px;font-size:12px;line-height:15px;color:#b8b8b8;font-weight:400;">Edit</div>
<svg class="a" style="left:1359px;top:94px" width="33" height="31" viewBox="0 0 33 31">
<path d="M2 13 Q2 -1 9 0.8 Q15 2 15.5 12.5 Q16 25.5 22.5 23 Q28.5 21 28.5 11" fill="none" stroke="#8a8a8a" stroke-width="1.4"/>
<path d="M3 26.5L28 1.8" stroke="#444" stroke-width="1.3"/>
<g fill="#d8d8d8" stroke="#7a7a7a" stroke-width="0.9"><rect x="0.5" y="11" width="3.2" height="3.2"/><rect x="27.3" y="0.6" width="3.2" height="3.2"/><rect x="28" y="10" width="3.2" height="3.2"/><rect x="1.3" y="24.5" width="3.2" height="3.2"/></g>
<rect x="13" y="10.5" width="5" height="5" fill="#555" stroke="#222" stroke-width="1"/>
</svg>
<div class="t" style="left:1375.5px;transform:translateX(-50%);top:128.94px;font-size:12px;line-height:15px;color:#333;font-weight:400;">Show</div>
<div class="t" style="left:1375.5px;transform:translateX(-50%);top:142.84px;font-size:12px;line-height:15px;color:#333;font-weight:400;">Connectors</div>
<div class="t" style="left:1356.7px;transform:translateX(-50%);top:161.74px;font-size:12px;line-height:15px;color:#333;font-weight:400;">Misc</div>
<div class="a" style="left:1412.4px;top:92px;width:1px;height:82px;background:#d5d5d5"></div>
<div class="t" style="left:1199.5px;transform:translateX(-50%);top:161.74px;font-size:12px;line-height:15px;color:#333;font-weight:400;">Printing</div>
<div class="a" style="left:316px;top:178px;width:1112px;height:712px;background:#383838;border-top:1px solid #262626"></div>
<div class="a" style="left:321px;top:184px;width:1097px;height:700px;border:1px solid #2b2b2b;border-bottom:none"></div>
<div class="a" style="left:322px;top:211px;width:1095px;height:1px;background:#2b2b2b"></div>
<div class="a" style="left:333px;top:187.5px;width:1022px;height:21px;border:1px solid #2b2b2b"></div>
<div class="t" style="left:338.5px;top:192.14px;font-size:12px;line-height:15px;color:#1c1c1c;font-weight:400;">Libbey1</div>
<div class="a" style="left:1360px;top:189px;width:17.5px;height:17.5px;border:1px solid #2e2e2e;background:#3e3e3e"></div>
<div class="a" style="left:1383px;top:189px;width:17.5px;height:17.5px;border:1px solid #2e2e2e;background:#3e3e3e"></div>
<svg class="a" style="left:1362px;top:191px" width="14" height="14"><rect x="3" y="1" width="10" height="8" fill="none" stroke="#111" stroke-width="1.2"/><rect x="1" y="4" width="10" height="9" fill="#3e3e3e" stroke="#111" stroke-width="1.2"/><path d="M3 7H6M3 9H6M3 11H6" stroke="#111" stroke-width="0.9"/><rect x="7" y="6.5" width="3" height="5" fill="#111"/></svg>
<svg class="a" style="left:1385px;top:191px" width="14" height="14"><rect x="2" y="3" width="8" height="10" fill="none" stroke="#2a2a2a" stroke-width="1"/><path d="M4 11L12 2" stroke="#2a2a2a" stroke-width="1.2"/></svg>
<div class="a" style="left:324px;top:220.7px;width:22px;height:22px;background:#1e2833"></div>
<svg class="a" style="left:326px;top:223px" width="14" height="12"><path d="M1 1L12 5L8 7L10 11L8 12L6 8L3 10Z" fill="#0a1530"/></svg>
<svg class="a" style="left:326px;top:248px" width="12" height="14"><path d="M2 13Q0 9 4 5Q8 1 11 3Q8 7 6 12Z" fill="#3e2e28"/></svg>
<div class="a" style="left:328px;top:267px;width:10px;height:1px;background:#2e2e2e"></div>
<svg class="a" style="left:326px;top:273px" width="11" height="12"><rect x="1" y="1" width="9" height="10" fill="none" stroke="#1c3e1c" stroke-width="1.3"/><path d="M1 6H10M5.5 1V11" stroke="#1c3e1c" stroke-width="1"/></svg>
<svg class="a" style="left:326px;top:294px" width="11" height="12"><path d="M1 2H10M1 5H8M1 8H10" stroke="#1e4a1e" stroke-width="1.4"/><circle cx="3" cy="10" r="2" fill="#5a3a10"/></svg>
<div class="a" style="left:347px;top:220px;width:1070px;height:1px;background:#303030"></div>
<div class="a" style="left:356px;top:227.5px;width:1028px;height:54px;border:1.5px solid #000;border-bottom-width:1.5px"></div>
<div class="a" style="left:1372px;top:219.5px;width:1px;height:9px;background:#000"></div>
<div class="a" style="left:1335px;top:214px;width:16px;height:14px;background:#3f3f3f;border:1px solid #353535"></div>
<div class="a" style="left:1360px;top:214px;width:16px;height:14px;background:#3f3f3f;border:1px solid #353535"></div>
<svg class="a" style="left:1399px;top:225px" width="15" height="16"><rect x="0.7" y="0.7" width="13.3" height="11" fill="none" stroke="#000" stroke-width="1.4"/><path d="M3 5V3H5M10 3H12V5M12 8V10H10M5 10H3V8" fill="none" stroke="#000" stroke-width="1"/><rect x="3" y="13" width="9" height="1.6" fill="#000"/></svg>
<div class="a" style="left:1382px;top:823.3px;width:20px;height:19.5px;border:1px solid #2e2e2e"></div>
<svg class="a" style="left:1386px;top:827px" width="12" height="12"><circle cx="6" cy="6" r="5.2" fill="#303030" stroke="#252525" stroke-width="1.2"/><circle cx="6" cy="6" r="3.6" fill="#0f3412"/><path d="M4.5 4.5L7 7M4.5 4.5V6.5" stroke="#2a4a2a" stroke-width="0.8" fill="none"/></svg>
<div class="a" style="left:347px;top:857.5px;width:1070px;height:25.5px;background:#060b10"></div>
<div class="a" style="left:1316px;top:860px;width:49px;height:20px;background:#3c3c3c"></div>
<div class="a" style="left:1349px;top:861.5px;width:15px;height:17px;border:1px solid #2a2a2a"></div>
<svg class="a" style="left:1351px;top:863px" width="11" height="15"><path d="M2 5L5.5 1.5L9 5M2 9.5L5.5 13L9 9.5" fill="none" stroke="#222" stroke-width="1.2"/></svg>
<div class="t" style="left:1320px;top:864.27px;font-size:12.2px;line-height:15px;color:#1a1a1a;font-weight:400;">36%</div>
<svg class="a" style="left:1159px;top:862px" width="14" height="16"><path d="M6 6V3Q6 1 9 1Q12 1 12 3V5" fill="none" stroke="#333" stroke-width="1.3"/><rect x="0.5" y="7" width="9" height="7" fill="#5a4a10"/><path d="M1 13L4 8M4.5 13L7.5 8" stroke="#111" stroke-width="1.2"/></svg>
<svg class="a" style="left:1181px;top:861px" width="18" height="18"><circle cx="10" cy="8" r="3.6" fill="#2a3540" stroke="#1a1f24" stroke-width="1"/><path d="M7.5 10.5L4 15" stroke="#5a4a20" stroke-width="2"/></svg>
<svg class="a" style="left:1204px;top:861px" width="18" height="18"><circle cx="10" cy="8" r="3.6" fill="#2a3540" stroke="#1a1f24" stroke-width="1"/><path d="M7.5 10.5L4 15" stroke="#5a4a20" stroke-width="2"/></svg>
<svg class="a" style="left:1226px;top:861px" width="18" height="18"><circle cx="10" cy="8" r="3.6" fill="#2a3540" stroke="#1a1f24" stroke-width="1"/><path d="M7.5 10.5L4 15" stroke="#5a4a20" stroke-width="2"/></svg>
<svg class="a" style="left:1249px;top:861px" width="18" height="18"><circle cx="6" cy="8" r="3.6" fill="#2a3540" stroke="#1a1f24" stroke-width="1"/><path d="M8.5 10.5L12 15" stroke="#5a4a20" stroke-width="2"/></svg>
<svg class="a" style="left:1271.6px;top:861px" width="18" height="18"><circle cx="6" cy="8" r="3.6" fill="#2a3540" stroke="#1a1f24" stroke-width="1"/><path d="M8.5 10.5L12 15" stroke="#5a4a20" stroke-width="2"/></svg>
<svg class="a" style="left:1371px;top:861px" width="18" height="18"><circle cx="6" cy="8" r="3.6" fill="#2a3540" stroke="#1a1f24" stroke-width="1"/><path d="M8.5 10.5L12 15" stroke="#5a4a20" stroke-width="2"/></svg>
<svg class="a" style="left:1392px;top:861px" width="18" height="18"><circle cx="6" cy="8" r="3.6" fill="#2a3540" stroke="#1a1f24" stroke-width="1"/><path d="M8.5 10.5L12 15" stroke="#5a4a20" stroke-width="2"/></svg>
<div class="a" style="left:1181px;top:862px;width:16px;height:16px;border:1px dashed #3a3a3a"></div>
<div class="t" style="left:1205px;top:859.23px;font-size:8px;line-height:10px;color:#383838;font-weight:700;">100</div>
<div class="t" style="left:1227px;top:859.23px;font-size:8px;line-height:10px;color:#383838;font-weight:700;">ALL</div>
<div class="a" style="left:1253px;top:864px;width:5px;height:1.5px;background:#333"></div>
<div class="a" style="left:1260px;top:864px;width:5px;height:1.5px;background:#333"></div>
<div class="a" style="left:1283px;top:864px;width:6px;height:1.5px;background:#333"></div>
<svg class="a" style="left:1385px;top:862px" width="8" height="8"><path d="M4 0.5V7.5M0.5 4H7.5" stroke="#333" stroke-width="1.5"/></svg>
<svg class="a" style="left:1399px;top:862px" width="14" height="8"><path d="M3.5 0.5V6.5M0.5 3.5H6.5M10.5 0.5V6.5M7.5 3.5H13.5" stroke="#333" stroke-width="1.5"/></svg>
<div class="a" style="left:316px;top:889px;width:1113px;height:1px;background:#b8b8b8"></div>
<div class="a" style="left:1428px;top:178px;width:1px;height:712px;background:#c0c0c0"></div>
<div class="a" style="left:315px;top:178px;width:1px;height:712px;background:#a8a8a8"></div>
<div class="a" style="left:312px;top:467px;width:2px;height:15px;background:repeating-linear-gradient(180deg,#9a9a9a 0px,#9a9a9a 1px,#fff 1px,#fff 2px)"></div>
<div class="a" style="left:316px;top:306px;width:20px;height:524px;background:#c1cdd5"></div>
<div class="a" style="left:336px;top:229px;width:1042px;height:610px;background:#c1cdd5;border-right:1px solid #d4dce2;border-bottom:1px solid #d4dce2"></div>
<div class="t" style="left:358.8px;top:249.39px;font-size:16.2px;line-height:20px;color:#2a2a2a;font-weight:400;-webkit-text-stroke:0.4px #c1cdd5">Settings</div>
<div class="a" style="left:1333px;top:251px;width:18px;height:17.5px;border:1px solid #8a8a8a;background:#efefef"></div>
<svg class="a" style="left:1334px;top:252px" width="16" height="16"><circle cx="8" cy="7.8" r="6.6" fill="#f4f4f4" stroke="#7a7a7a" stroke-width="1.1"/><circle cx="8" cy="7.8" r="5.2" fill="#fff" stroke="#8a8a8a" stroke-width="0.8"/><circle cx="8" cy="7.8" r="4.2" fill="#e8102a"/><path d="M5.4 5.2L10.6 10.4M10.6 5.2L5.4 10.4" stroke="#fff" stroke-width="2.2"/></svg>
<div class="a" style="left:351.5px;top:276.6px;width:50px;height:22px;border:1px solid #acacac;background:linear-gradient(#f2f2f2,#e4e4e4)"></div>
<div class="t" style="left:360.5px;top:280.62px;font-size:11.2px;line-height:14px;color:#222;font-weight:400;">Basics</div>
<div class="a" style="left:348.5px;top:298px;width:1017px;height:497px;border:1px solid #a6a6a6;background:#fff"></div>
<div class="a" style="left:401px;top:274.5px;width:106.5px;height:25px;border:1px solid #acacac;border-bottom:none;background:#fff"></div>
<div class="t" style="left:410px;top:280.55px;font-size:11.4px;line-height:14px;color:#222;font-weight:400;">Packout Settings</div>
<div class="a" style="left:1347px;top:300px;width:16px;height:492px;background:#f0f0f0"></div>
<div class="a" style="left:1347px;top:334px;width:16px;height:371px;background:#c2c2c2"></div>
<svg class="a" style="left:1350.5px;top:307px" width="9" height="6"><path d="M0.8 5.2L4.5 1.2L8.2 5.2" fill="none" stroke="#555" stroke-width="1.5"/></svg>
<svg class="a" style="left:1350.5px;top:781px" width="9" height="6"><path d="M0.8 0.8L4.5 4.8L8.2 0.8" fill="none" stroke="#555" stroke-width="1.5"/></svg>
<div class="t" style="left:373.6px;top:307.46px;font-size:16px;line-height:20px;color:#1e1e1e;font-weight:400;-webkit-text-stroke:0.4px #fff">Packout By</div>
<div class="t" style="left:383.8px;top:340.65px;font-size:11.1px;line-height:14px;color:#222;font-weight:400;">Box Type:</div>
<div class="a" style="left:483px;top:336px;width:851px;height:22px;border:1px solid #a9a9a9;background:#fff"></div>
<div class="a" style="left:1317px;top:338px;width:15px;height:18px;border:1px solid #9a9a9a;background:linear-gradient(#f4f4f4,#e0e0e0)"></div><svg class="a" style="left:1320.0px;top:344.0px" width="9" height="6"><path d="M0.8 0.8L4.5 4.8L8.2 0.8" fill="none" stroke="#444" stroke-width="1.7"/></svg>
<div class="t" style="left:488px;top:340.69px;font-size:11px;line-height:14px;color:#222;font-weight:400;">SCC 123</div>
<div class="t" style="left:373.6px;top:376.06px;font-size:15.7px;line-height:20px;color:#1e1e1e;font-weight:400;-webkit-text-stroke:0.4px #fff">Packing List:</div>
<div class="a" style="left:383.2px;top:405px;width:17.5px;height:18px;border:1px solid #9a9a9a;background:#e8e8e8"></div>
<div class="a" style="left:405.4px;top:405px;width:17.5px;height:18px;border:1px solid #d0d0d0;background:#f0f0f0"></div>
<div class="a" style="left:427px;top:405px;width:17.5px;height:18px;border:1px solid #9a9a9a;background:#e8e8e8"></div>
<svg class="a" style="left:384.5px;top:406.5px" width="15" height="15"><path d="M1.5 4L7 1L12.5 4V11L7 14L1.5 11Z M1.5 4L7 7L12.5 4 M7 7V14" fill="none" stroke="#111" stroke-width="1.4"/><circle cx="10" cy="10.5" r="2.6" fill="#fff" stroke="#111" stroke-width="1.1"/><path d="M11.8 12.3L14 14.5" stroke="#111" stroke-width="1.3"/></svg>
<svg class="a" style="left:407px;top:407px" width="15" height="15"><rect x="1" y="1" width="9" height="12" fill="none" stroke="#aaa" stroke-width="0.9"/><path d="M3 4H7M3 7H7M3 10H7M8 4L9.5 5.5L12 2.5M8 7L9.5 8.5L12 5.5M8 10L9.5 11.5L12 8.5" fill="none" stroke="#aaa" stroke-width="0.9"/></svg>
<svg class="a" style="left:428.5px;top:406.5px" width="15" height="15"><path d="M1.5 4L7 1L12.5 4V11L7 14L1.5 11Z M1.5 4L7 7L12.5 4 M7 7V14" fill="none" stroke="#111" stroke-width="1.4"/><circle cx="10.5" cy="11" r="3.3" fill="#111"/><rect x="8.5" y="10.4" width="4" height="1.3" fill="#fff"/></svg>
<div class="a" style="left:383px;top:427px;width:950.5px;height:200px;border:1px solid #d6d6d6;background:#fff"></div>
<div class="a" style="left:384px;top:509px;width:948.5px;height:27px;background:#b3d6f0"></div>
<div class="a" style="left:573.5px;top:509px;width:119.70000000000005px;height:27px;background:#f2f2f2"></div>
<div class="a" style="left:472.9px;top:427px;width:1px;height:109px;background:#d6d6d6"></div>
<div class="a" style="left:572.7px;top:427px;width:1px;height:109px;background:#d6d6d6"></div>
<div class="a" style="left:692.7px;top:427px;width:1px;height:109px;background:#d6d6d6"></div>
<div class="a" style="left:783.8px;top:427px;width:1px;height:109px;background:#d6d6d6"></div>
<div class="a" style="left:837.0px;top:427px;width:1px;height:109px;background:#d6d6d6"></div>
<div class="a" style="left:906.0px;top:427px;width:1px;height:109px;background:#d6d6d6"></div>
<div class="a" style="left:996.2px;top:427px;width:1px;height:109px;background:#d6d6d6"></div>
<div class="a" style="left:1086.8px;top:427px;width:1px;height:109px;background:#d6d6d6"></div>
<div class="a" style="left:1177.0px;top:427px;width:1px;height:109px;background:#d6d6d6"></div>
<div class="a" style="left:1241.1px;top:427px;width:1px;height:109px;background:#d6d6d6"></div>
<div class="a" style="left:383px;top:481.5px;width:950.5px;height:1px;background:#d6d6d6"></div>
<div class="a" style="left:383px;top:508.5px;width:950.5px;height:1px;background:#d6d6d6"></div>
<div class="a" style="left:383px;top:535.5px;width:950.5px;height:1px;background:#d6d6d6"></div>
<div class="t" style="left:388.3px;top:449.48px;font-size:11.6px;line-height:14px;color:#222;font-weight:400;">Name</div>
<div class="t" style="left:478.5px;top:449.48px;font-size:11.6px;line-height:14px;color:#222;font-weight:400;">Revision</div>
<div class="t" style="left:578.5px;top:449.48px;font-size:11.6px;line-height:14px;color:#222;font-weight:400;">Revision Mode</div>
<div class="t" style="left:698px;top:449.48px;font-size:11.6px;line-height:14px;color:#222;font-weight:400;">Description</div>
<div class="t" style="left:789.3px;top:449.48px;font-size:11.6px;line-height:14px;color:#222;font-weight:400;">Quant...</div>
<div class="t" style="left:842.5px;top:449.48px;font-size:11.6px;line-height:14px;color:#222;font-weight:400;">Unit of Is...</div>
<div class="t" style="left:911.5px;top:449.48px;font-size:11.6px;line-height:14px;color:#222;font-weight:400;">Verification...</div>
<div class="t" style="left:1181.8px;top:449.48px;font-size:11.6px;line-height:14px;color:#222;font-weight:400;">No Faile...</div>
<div class="t" style="left:1246.5px;top:449.48px;font-size:11.6px;line-height:14px;color:#222;font-weight:400;">Process Valid...</div>
<div class="t" style="left:1001px;top:433.48px;font-size:11.6px;line-height:14px;color:#222;font-weight:400;">Has No</div>
<div class="t" style="left:1001px;top:449.48px;font-size:11.6px;line-height:14px;color:#222;font-weight:400;">Unresolved</div>
<div class="t" style="left:1001px;top:465.48px;font-size:11.6px;line-height:14px;color:#222;font-weight:400;">Defects</div>
<div class="t" style="left:1092px;top:433.48px;font-size:11.6px;line-height:14px;color:#222;font-weight:400;">Has No</div>
<div class="t" style="left:1092px;top:449.48px;font-size:11.6px;line-height:14px;color:#222;font-weight:400;">Unresolved</div>
<div class="t" style="left:1092px;top:465.48px;font-size:11.6px;line-height:14px;color:#222;font-weight:400;">Symptoms</div>
<svg class="a" style="left:680px;top:451px" width="9" height="6"><path d="M0 5.5H9L4.5 0.5Z" fill="#444"/></svg>
<div class="t" style="left:388.3px;top:490.48px;font-size:11.6px;line-height:14px;color:#222;font-weight:400;">56 - 1</div>
<div class="t" style="left:576.5px;top:490.48px;font-size:11.6px;line-height:14px;color:#222;font-weight:400;">Use Specific</div>
<div class="t" style="left:790px;top:490.48px;font-size:11.6px;line-height:14px;color:#222;font-weight:400;">1</div>
<div class="t" style="left:842.5px;top:490.48px;font-size:11.6px;line-height:14px;color:#222;font-weight:400;">Pieces</div>
<div class="t" style="left:912px;top:490.48px;font-size:11.6px;line-height:14px;color:#222;font-weight:400;">Acknowledge</div>
<div class="t" style="left:1246.5px;top:488.48px;font-size:11.6px;line-height:14px;color:#222;font-weight:400;">Completed A...</div>
<div class="t" style="left:388.3px;top:517.48px;font-size:11.6px;line-height:14px;color:#222;font-weight:400;">From Parts List</div>
<div class="t" style="left:479.5px;top:517.48px;font-size:11.6px;line-height:14px;color:#222;font-weight:400;">From Parts List</div>
<div class="t" style="left:576.5px;top:517.48px;font-size:11.6px;line-height:14px;color:#222;font-weight:400;">Use Specific</div>
<div class="t" style="left:698px;top:517.48px;font-size:11.6px;line-height:14px;color:#222;font-weight:400;">From Parts List</div>
<div class="t" style="left:790.5px;top:517.48px;font-size:11.6px;line-height:14px;color:#222;font-weight:400;">From Pa</div>
<div class="t" style="left:842.5px;top:517.48px;font-size:11.6px;line-height:14px;color:#222;font-weight:400;">From Par...</div>
<div class="t" style="left:912px;top:517.48px;font-size:11.6px;line-height:14px;color:#222;font-weight:400;">Scan UID</div>
<div class="t" style="left:1246.5px;top:515.48px;font-size:11.6px;line-height:14px;color:#222;font-weight:400;">No Validation</div>
<div class="a" style="left:1035.5px;top:489.8px;width:13px;height:13px;border:1px solid #707070;background:#fff"></div>
<div class="a" style="left:1035.5px;top:516.8px;width:13px;height:13px;border:1px solid #707070;background:#fff"></div>
<div class="a" style="left:1125.5px;top:489.8px;width:13px;height:13px;border:1px solid #707070;background:#fff"></div>
<div class="a" style="left:1125.5px;top:516.8px;width:13px;height:13px;border:1px solid #707070;background:#fff"></div>
<div class="a" style="left:1202.5px;top:489.8px;width:13px;height:13px;border:1px solid #707070;background:#fff"></div>
<div class="a" style="left:1202.5px;top:516.8px;width:13px;height:13px;border:1px solid #707070;background:#fff"></div>
<div class="t" style="left:373.4px;top:645.25px;font-size:16.3px;line-height:20px;color:#1e1e1e;font-weight:400;-webkit-text-stroke:0.4px #fff">Labeling</div>
<div class="t" style="left:383.6px;top:680.48px;font-size:11.6px;line-height:14px;color:#222;font-weight:400;">Label Template:</div>
<div class="a" style="left:483.3px;top:674px;width:805.5px;height:22px;border:1px solid #a9a9a9;background:#fff"></div>
<div class="a" style="left:1272.3px;top:676.3px;width:14.5px;height:17.5px;border:1px solid #9a9a9a;background:linear-gradient(#f4f4f4,#e0e0e0)"></div><svg class="a" style="left:1275.05px;top:682.05px" width="9" height="6"><path d="M0.8 0.8L4.5 4.8L8.2 0.8" fill="none" stroke="#444" stroke-width="1.7"/></svg>
<div class="a" style="left:1294.2px;top:674.3px;width:40px;height:21.5px;border:1px solid #d8d8d8;background:#f4f4f4"></div>
<svg class="a" style="left:1306px;top:677px" width="16" height="16"><circle cx="8" cy="8" r="6.8" fill="#f4f4f4" stroke="#d8d8d8" stroke-width="1"/><circle cx="8" cy="8" r="5" fill="#cfe8cf"/><path d="M8 4.8V11.2M4.8 8H11.2" stroke="#fff" stroke-width="2"/></svg>
<div class="t" style="left:373.4px;top:714.45px;font-size:16.6px;line-height:21px;color:#1e1e1e;font-weight:400;-webkit-text-stroke:0.4px #fff">Options</div>
<div class="t" style="left:383.6px;top:747.98px;font-size:11.6px;line-height:14px;color:#222;font-weight:400;">Batch Restrictions:</div>
<div class="a" style="left:483.3px;top:743px;width:249.5px;height:22px;border:1px solid #a9a9a9;background:#fff"></div>
<div class="a" style="left:716.4px;top:745px;width:14.6px;height:18px;border:1px solid #9a9a9a;background:linear-gradient(#f4f4f4,#e0e0e0)"></div><svg class="a" style="left:719.1999999999999px;top:751.0px" width="9" height="6"><path d="M0.8 0.8L4.5 4.8L8.2 0.8" fill="none" stroke="#444" stroke-width="1.7"/></svg>
<div class="t" style="left:488.7px;top:748.34px;font-size:12px;line-height:15px;color:#222;font-weight:400;">Allow units from any batch to be packed</div>
<div class="a" style="left:383px;top:774.3px;width:12.7px;height:12.7px;border:1px solid #707070;background:#fff"></div>
<div class="t" style="left:400.5px;top:774.00px;font-size:11.55px;line-height:14px;color:#222;font-weight:400;">Force Complete Boxes:</div>
<div class="a" style="left:1288.2px;top:807px;width:74.6px;height:22px;border:1px solid #acacac;background:linear-gradient(#f2f2f2,#e6e6e6)"></div>
<div class="t" style="left:1325.6px;transform:translateX(-50%);top:812.02px;font-size:11.5px;line-height:14px;color:#222;font-weight:400;">OK</div>
</body></html>
